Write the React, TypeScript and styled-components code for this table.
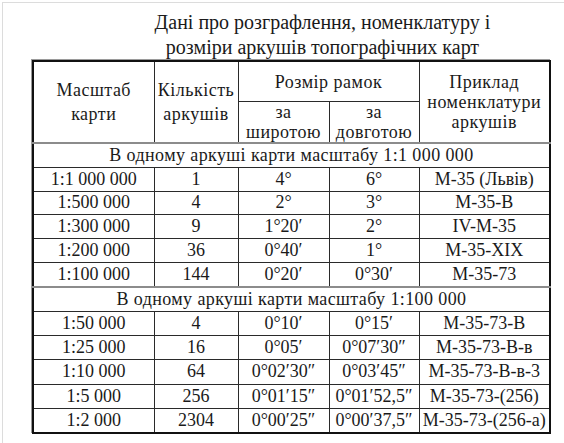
import styled, { createGlobalStyle } from "styled-components";

const GlobalStyle = createGlobalStyle`
  html, body {
    margin: 0;
    padding: 0;
    background: #ffffff;
  }
  body {
    font-family: "Liberation Serif", "Times New Roman", serif;
    color: #1a1a1a;
  }
`;

type Row = [string, string, string, string, string];

const firstBlock: Row[] = [
  ["1:1 000 000", "1", "4°", "6°", "М-35 (Львів)"],
  ["1:500 000", "4", "2°", "3°", "М-35-В"],
  ["1:300 000", "9", "1°20′", "2°", "IV-М-35"],
  ["1:200 000", "36", "0°40′", "1°", "М-35-XIX"],
  ["1:100 000", "144", "0°20′", "0°30′", "М-35-73"],
];

const secondBlock: Row[] = [
  ["1:50 000", "4", "0°10′", "0°15′", "М-35-73-В"],
  ["1:25 000", "16", "0°05′", "0°07′30″", "М-35-73-В-в"],
  ["1:10 000", "64", "0°02′30″", "0°03′45″", "М-35-73-В-в-3"],
  ["1:5 000", "256", "0°01′15″", "0°01′52,5″", "М-35-73-(256)"],
  ["1:2 000", "2304", "0°00′25″", "0°00′37,5″", "М-35-73-(256-а)"],
];

function App() {
  return (
    <>
      <GlobalStyle />
      <Page>
        <Title>
          Дані про розграфлення, номенклатуру і
          <br />
          розміри аркушів топографічних карт
        </Title>
        <Table>
          <colgroup>
            <col style={{ width: 121 }} />
            <col style={{ width: 84 }} />
            <col style={{ width: 91 }} />
            <col style={{ width: 90 }} />
            <col style={{ width: 131 }} />
          </colgroup>
          <thead>
            <tr>
              <HeadCell rowSpan={2}>
                Масштаб
                <br />
                карти
              </HeadCell>
              <HeadCell rowSpan={2}>
                Кількість
                <br />
                аркушів
              </HeadCell>
              <HeadCell colSpan={2} $height={39}>
                Розмір рамок
              </HeadCell>
              <HeadCell rowSpan={2} $tight>
                Приклад
                <br />
                номенклатури
                <br />
                аркушів
              </HeadCell>
            </tr>
            <tr>
              <HeadCell $height={40} $tight>
                за
                <br />
                широтою
              </HeadCell>
              <HeadCell $height={40} $tight>
                за
                <br />
                довготою
              </HeadCell>
            </tr>
          </thead>
          <tbody>
            <tr>
              <SectionCell colSpan={5} $height={22.8}>
                В одному аркуші карти масштабу 1:1 000 000
              </SectionCell>
            </tr>
            {firstBlock.map((row) => (
              <tr key={row[0]}>
                {row.map((value, i) => (
                  <Cell key={i} $height={22.8}>
                    {value}
                  </Cell>
                ))}
              </tr>
            ))}
            <tr>
              <SectionCell colSpan={5} $height={23.2}>
                В одному аркуші карти масштабу 1:100 000
              </SectionCell>
            </tr>
            {secondBlock.map((row) => (
              <tr key={row[0]}>
                {row.map((value, i) => (
                  <Cell key={i} $height={23.2}>
                    {value}
                  </Cell>
                ))}
              </tr>
            ))}
          </tbody>
        </Table>
      </Page>
    </>
  );
}

export default App;

const serif = `"Liberation Serif", "Times New Roman", serif`;

const Page = styled.div`
  margin: 2px 0 0 2px;
  height: 441px;
  overflow: hidden;
  box-sizing: border-box;
  border-top: 1px solid #dcdcdc;
  border-left: 1px solid #dcdcdc;
  padding: 7px 0 0 29px;
`;

const Title = styled.div`
  width: 517px;
  margin-left: 32px;
  text-align: center;
  font-family: ${serif};
  font-size: 20px;
  line-height: 25px;
  color: #1a1a1a;
`;

const Table = styled.table`
  width: 519px;
  table-layout: fixed;
  border-collapse: collapse;
  border: 2px solid #111111;
  box-shadow: -1px -1px 0 #9a9a9a;
  font-family: ${serif};
  font-size: 18px;
  color: #1a1a1a;
`;

const HeadCell = styled.th<{ $height?: number; $tight?: boolean }>`
  font-family: ${serif};
  font-size: 18px;
  font-weight: normal;
  letter-spacing: 0.5px;
  text-align: center;
  vertical-align: middle;
  border: 1px solid #2a2a2a;
  padding: 0 1px;
  height: ${({ $height }) => ($height ? `${$height}px` : "auto")};
  line-height: ${({ $tight }) => ($tight ? "20px" : "24px")};
  white-space: nowrap;
`;

const SectionCell = styled.td<{ $height: number }>`
  font-family: ${serif};
  font-size: 18px;
  text-align: center;
  height: ${({ $height }) => `${$height}px`};
  padding: 0;
  line-height: 21px;
  letter-spacing: 0.4px;
  border-top: 2px solid #8c8c8c;
  border-bottom: 1px solid #2a2a2a;
`;

const Cell = styled.td<{ $height: number }>`
  font-family: ${serif};
  font-size: 18px;
  text-align: center;
  padding: 0;
  height: ${({ $height }) => `${$height}px`};
  line-height: 21px;
  border: 1px solid #2a2a2a;
  white-space: nowrap;
`;
